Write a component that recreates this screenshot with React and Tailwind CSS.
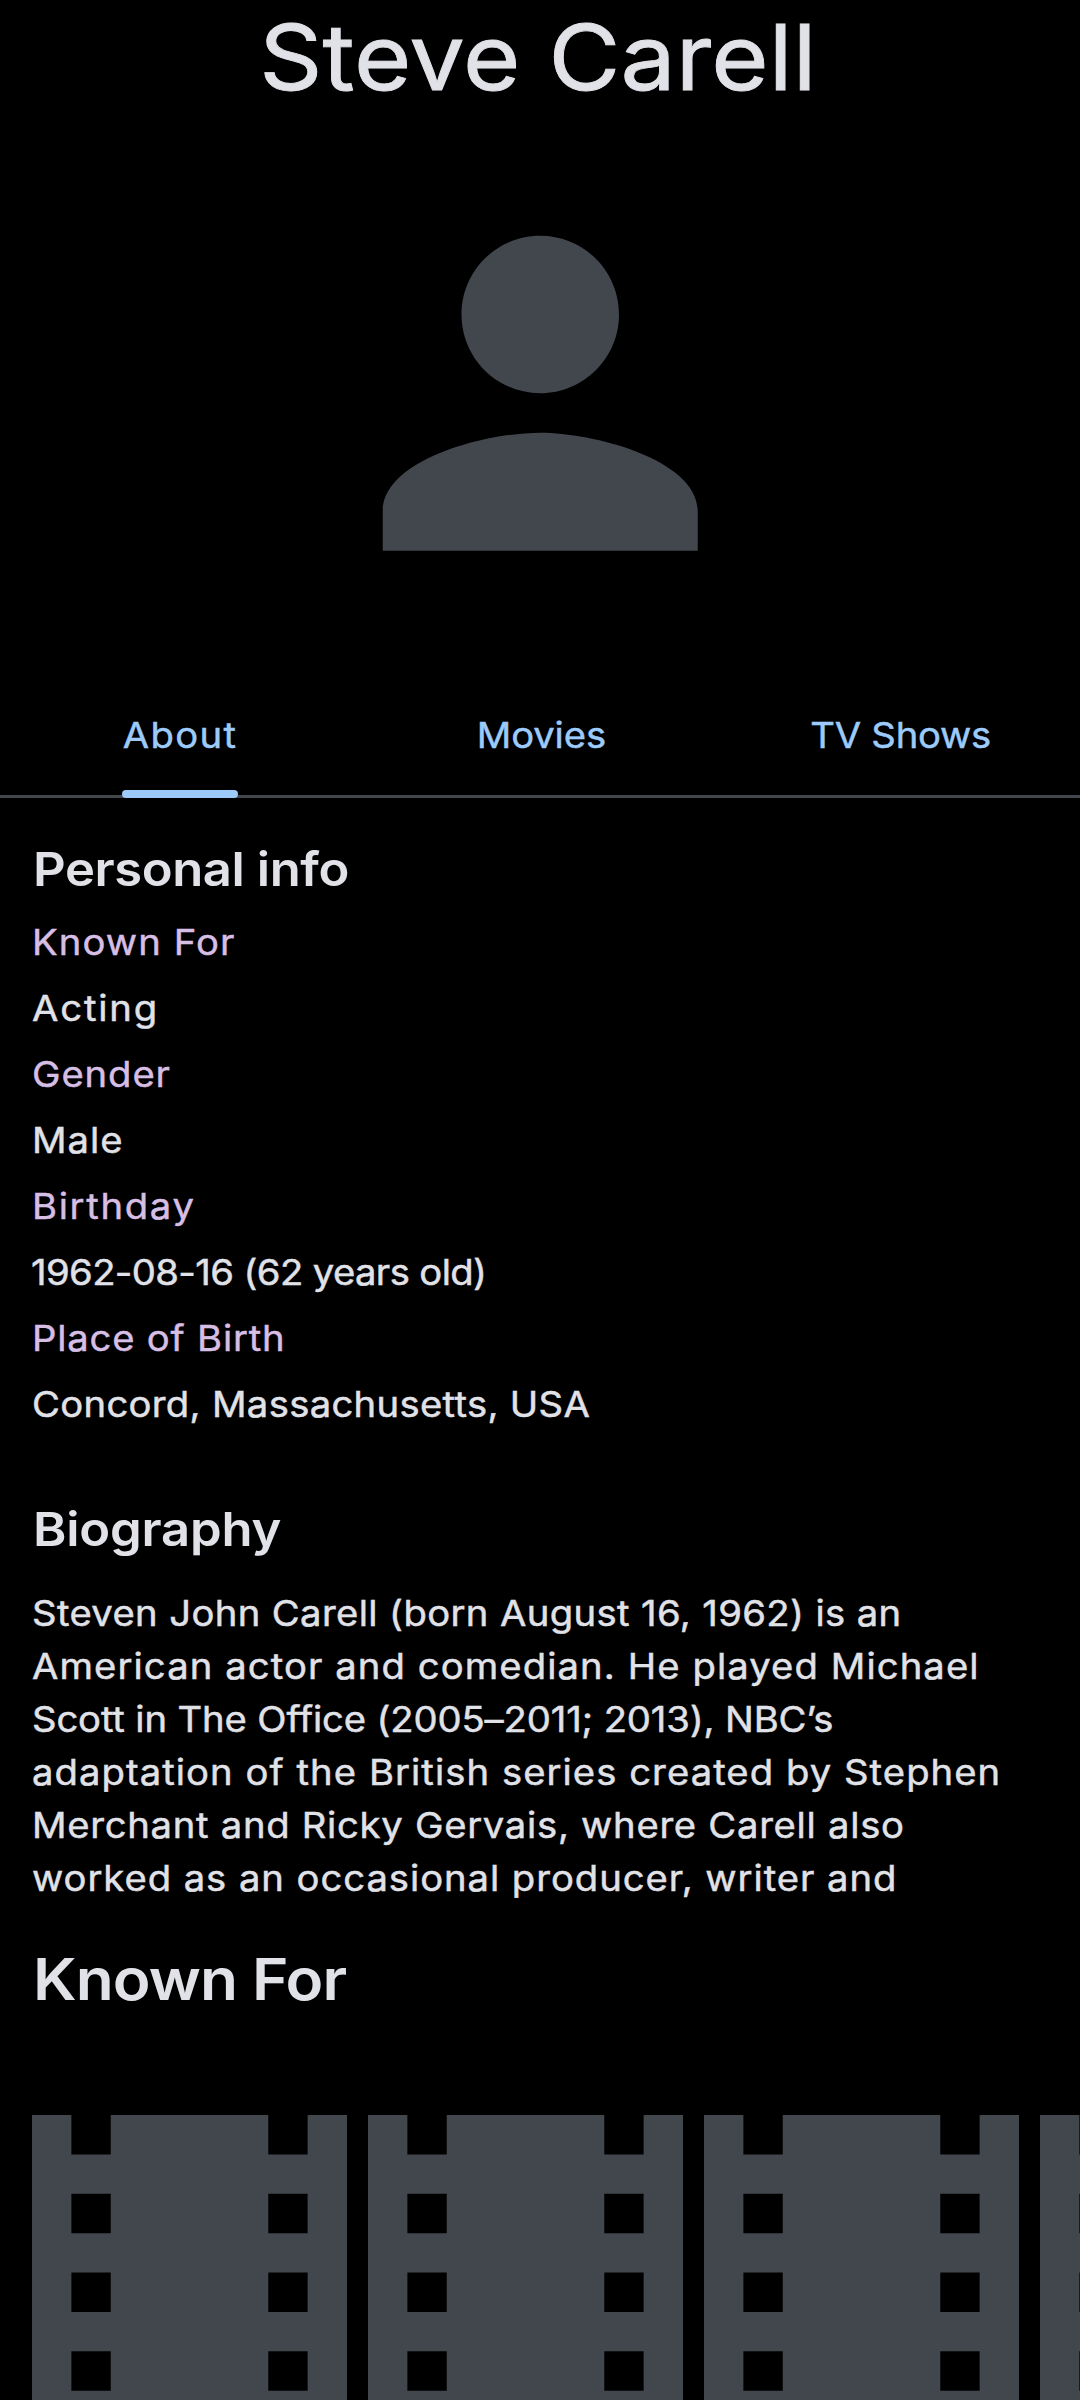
import React from "react";

const tabs = [
  { label: "About", active: true, className: "tracking-[1.26px]" },
  { label: "Movies", className: "tracking-[-0.1px] translate-x-[1.5px]" },
  { label: "TV Shows", className: "tracking-[-0.23px] translate-x-[1px]" },
];

const info = [
  { label: "Known For", value: "Acting", labelClass: "tracking-[1.03px]", valueClass: "tracking-[1.7px]" },
  { label: "Gender", value: "Male", labelClass: "tracking-[0.84px]", valueClass: "tracking-[0.9px]" },
  { label: "Birthday", value: "1962-08-16 (62 years old)", labelClass: "tracking-[1.55px]", valueClass: "tracking-[-0.56px] -ml-px" },
  { label: "Place of Birth", value: "Concord, Massachusetts, USA", labelClass: "tracking-[0.75px]", valueClass: "tracking-[0.3px]" },
];

const biography = [
  { text: "Steven John Carell (born August 16, 1962) is an", className: "tracking-[0.35px]" },
  { text: "American actor and comedian. He played Michael", className: "tracking-[1.01px]" },
  { text: "Scott in The Office (2005–2011; 2013), NBC’s", className: "tracking-[-0.12px]" },
  { text: "adaptation of the British series created by Stephen", className: "tracking-[0.98px]" },
  { text: "Merchant and Ricky Gervais, where Carell also", className: "tracking-[0.66px]" },
  { text: "worked as an occasional producer, writer and", className: "tracking-[0.88px]" },
];

function PersonIcon() {
  return (
    <svg viewBox="0 0 24 24" className="size-[472.5px] shrink-0 fill-[#42474e]" aria-hidden="true">
      <path d="M12 12c2.21 0 4-1.79 4-4s-1.79-4-4-4-4 1.79-4 4 1.79 4 4 4zm0 2c-2.67 0-8 1.34-8 4v2h16v-2c0-2.66-5.33-4-8-4z" />
    </svg>
  );
}

function FilmPoster() {
  return (
    <svg viewBox="4 3 16 18" className="h-[354.375px] w-[315px] shrink-0 fill-[#42474e]" aria-hidden="true">
      <path d="M18 3v2h-2V3H8v2H6V3H4v18h2v-2h2v2h8v-2h2v2h2V3h-2zM8 17H6v-2h2v2zm0-4H6v-2h2v2zm0-4H6V7h2v2zm10 8h-2v-2h2v2zm0-4h-2v-2h2v2zm0-4h-2V7h2v2z" />
    </svg>
  );
}

function Line({ className, children }) {
  return (
    <div className={`w-max origin-left scale-x-[1.08] whitespace-nowrap ${className}`}>{children}</div>
  );
}

export default function App() {
  return (
    <main className="h-[2400px] w-[1080px] overflow-hidden bg-black font-['Inter',sans-serif] text-[35.4px] font-normal text-[#e1e2e8] [-webkit-text-stroke:0.45px_currentColor]">
      <h1 className="flex h-[115px] justify-center text-[91px] leading-[115px] font-normal [-webkit-text-stroke:0.9px_currentColor]">
        <span className="block w-max translate-x-[-2px] scale-x-[1.08] tracking-[0.18px] whitespace-nowrap">Steve Carell</span>
      </h1>

      <div className="mt-[42px] flex h-[472px] justify-center">
        <PersonIcon />
      </div>

      <nav className="mt-[37px] grid h-[132px] grid-cols-3 border-b-3 border-[#42474e] text-[#9ccbfb]">
        {tabs.map((tab) => (
          <div key={tab.label} className="relative flex justify-center pt-[43px] leading-[53px]">
            <span className={`block h-[53px] w-max scale-x-[1.08] whitespace-nowrap ${tab.className}`}>{tab.label}</span>
            {tab.active && (
              <span className="absolute -bottom-[3px] left-[122px] h-2 w-[116px] rounded-[4px] bg-[#9ccbfb]" />
            )}
          </div>
        ))}
      </nav>

      <section className="mt-[41px] px-8">
        <h2 className="mb-[11px] pl-px text-[47px] leading-[60px] font-semibold [-webkit-text-stroke:0px]">
          <Line className="tracking-[-0.39px]">Personal info</Line>
        </h2>
        <dl className="leading-[66px]">
          {info.map((row) => (
            <div key={row.label}>
              <dt className="text-[#d6bee4] [-webkit-text-stroke-color:#d6bee4]">
                <Line className={row.labelClass}>{row.label}</Line>
              </dt>
              <dd>
                <Line className={row.valueClass}>{row.value}</Line>
              </dd>
            </div>
          ))}
        </dl>
      </section>

      <section className="mt-[61px] px-8">
        <h2 className="mb-[28px] pl-px text-[47px] leading-[60px] font-semibold [-webkit-text-stroke:0px]">
          <Line className="tracking-[-0.18px]">Biography</Line>
        </h2>
        <div className="leading-[53px]">
          {biography.map((line) => (
            <Line key={line.text} className={line.className}>{line.text}</Line>
          ))}
        </div>
      </section>

      <section className="mt-[38px] pl-8">
        <h2 className="mb-[100px] pl-px text-[57.5px] leading-[72px] font-semibold [-webkit-text-stroke:0px]">
          <Line className="tracking-[-0.83px]">Known For</Line>
        </h2>
        <div className="flex gap-[21px]">
          <FilmPoster />
          <FilmPoster />
          <FilmPoster />
          <FilmPoster />
        </div>
      </section>
    </main>
  );
}
